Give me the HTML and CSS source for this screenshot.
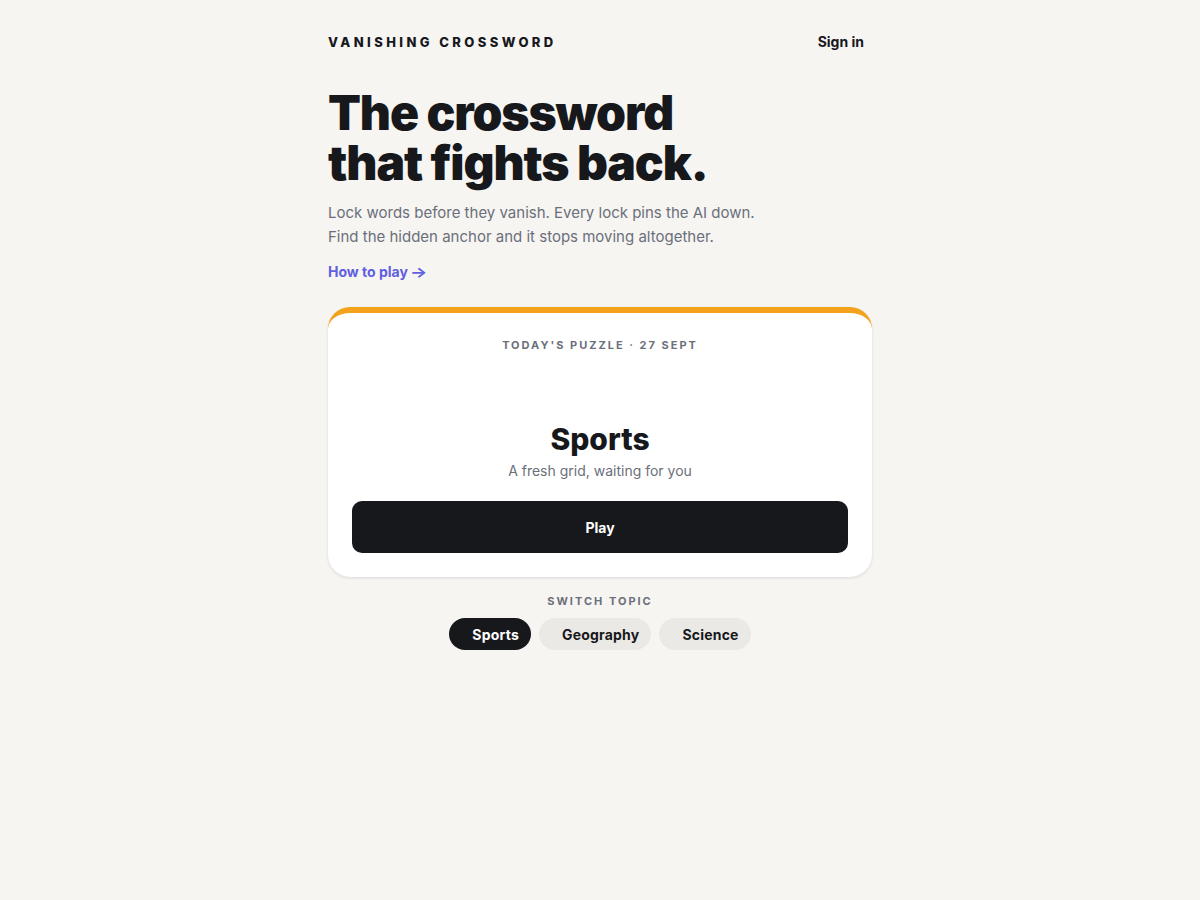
FILE: index.html
```html
<!DOCTYPE html>
<html lang="en">
<head>
<meta charset="utf-8">
<title>Vanishing Crossword</title>
<link rel="stylesheet" href="styles.css">
</head>
<body>
<main class="page">
  <header class="topbar">
    <div class="brand">VANISHING CROSSWORD</div>
    <a class="signin" href="#">Sign in</a>
  </header>

  <section class="hero">
    <h1 class="headline">The crossword<br>that fights back.</h1>
    <p class="lede">Lock words before they vanish. Every lock pins the AI down.<br>Find the hidden anchor and it stops moving altogether.</p>
    <a class="howto" href="#">How to play <span class="arrow">→</span></a>
  </section>

  <section class="card">
    <div class="card-label">TODAY'S PUZZLE · 27 SEPT</div>
    <div class="card-spacer"></div>
    <h2 class="topic">Sports</h2>
    <div class="topic-sub">A fresh grid, waiting for you</div>
    <button class="play">Play</button>
  </section>

  <section class="switch">
    <div class="switch-label">SWITCH TOPIC</div>
    <div class="pills">
      <button class="pill active">Sports</button>
      <button class="pill">Geography</button>
      <button class="pill">Science</button>
    </div>
  </section>
</main>
</body>
</html>
```

FILE: styles.css
```css
* { box-sizing: border-box; }
html, body { margin: 0; padding: 0; }
body {
  background: #f6f5f2;
  font-family: Inter, "Noto Sans", "Liberation Sans", sans-serif;
  color: #17181c;
}
.page {
  width: 544px;
  margin: 0 auto;
  padding-top: 28px;
}
.topbar {
  display: flex;
  justify-content: space-between;
  align-items: center;
  height: 27px;
  padding-right: 8px;
}
.brand {
  font-size: 13px;
  font-weight: 800;
  letter-spacing: 3.4px;
}
.signin {
  font-size: 14px;
  font-weight: 700;
  color: #17181c;
  text-decoration: none;
}
.hero { margin-top: 33px; }
.headline {
  margin: 0;
  font-size: 48px;
  line-height: 50px;
  font-weight: 900;
  letter-spacing: -1.1px;
}
.lede {
  margin: 13px 0 0;
  font-size: 15px;
  line-height: 24px;
  color: #6b6f7a;
}
.howto {
  display: block;
  margin-top: 13px;
  font-size: 14px;
  line-height: 20px;
  font-weight: 700;
  color: #5f5fe0;
  text-decoration: none;
}
.arrow {
  display: inline-block;
  transform: scaleX(1.3);
  transform-origin: left center;
  margin-left: -1px;
}
.card {
  margin-top: 25px;
  background: #fff;
  border-top: 6px solid #f2a31b;
  border-radius: 22px;
  box-shadow: 0 1px 3px rgba(20, 20, 30, 0.12);
  padding: 24px 24px 24px;
  text-align: center;
}
.card-label {
  font-size: 11px;
  line-height: 16px;
  font-weight: 700;
  letter-spacing: 2px;
  color: #6b6f7a;
}
.card-spacer { height: 68px; }
.topic {
  margin: 0;
  font-size: 30px;
  line-height: 36px;
  font-weight: 800;
  letter-spacing: 0;
}
.topic-sub {
  margin-top: 4px;
  font-size: 14px;
  line-height: 20px;
  color: #6b6f7a;
}
.play {
  display: block;
  width: 100%;
  height: 52px;
  margin-top: 20px;
  border: 0;
  border-radius: 10px;
  background: #17181c;
  color: #fff;
  font-family: inherit;
  font-size: 14px;
  font-weight: 700;
}
.switch {
  margin-top: 16px;
  text-align: center;
}
.switch-label {
  font-size: 11px;
  line-height: 16px;
  font-weight: 700;
  letter-spacing: 2px;
  color: #6b6f7a;
}
.pills {
  display: flex;
  justify-content: center;
  gap: 8px;
  margin-top: 9px;
}
.pill {
  height: 32px;
  padding: 0 12px 0 23px;
  border: 0;
  border-radius: 16px;
  background: #ebe9e5;
  color: #17181c;
  font-family: inherit;
  font-size: 14px;
  font-weight: 700;
  letter-spacing: 0.2px;
}
.pill.active {
  background: #17181c;
  color: #fff;
}
```
